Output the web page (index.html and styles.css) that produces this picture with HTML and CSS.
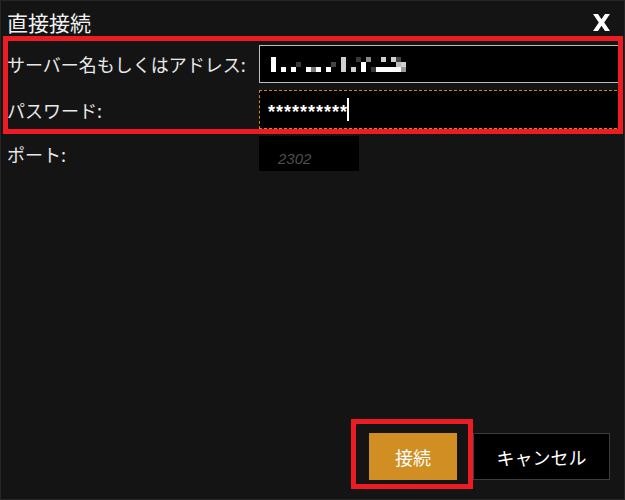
FILE: index.html
```html
<!DOCTYPE html>
<html lang="ja">
<head>
<meta charset="utf-8">
<title>直接接続</title>
<link rel="stylesheet" href="styles.css">
</head>
<body>
<div class="dialog">
  <div class="header">
    <div class="title">直接接続</div>
    <svg class="close" width="17" height="17" viewBox="0 0 17 17" aria-label="閉じる">
      <polygon fill="#ffffff" points="0,0 5,0 8.5,5.3 12,0 17,0 11.2,8.5 17,17 12,17 8.5,11.7 5,17 0,17 5.8,8.5"/>
    </svg>
  </div>
  <div class="form">
    <div class="row row-server">
      <label class="label">サーバー名もしくはアドレス:</label>
      <div class="field field-server">
        <svg class="mosaic" width="135" height="15" viewBox="0 0 27 3" shape-rendering="crispEdges">
          <rect x="0" y="0" width="1" height="3" fill="#fff"/>
          <rect x="2" y="2" width="1" height="1" fill="#fff"/>
          <rect x="4" y="2" width="1" height="1" fill="#fff"/>
          <rect x="5" y="1" width="1" height="1" fill="#3a3a3a"/>
          <rect x="7" y="2" width="1" height="1" fill="#fff"/>
          <rect x="8" y="2" width="1" height="1" fill="#7a7a7a"/>
          <rect x="9" y="2" width="1" height="1" fill="#fff"/>
          <rect x="11" y="2" width="1" height="1" fill="#fff"/>
          <rect x="12" y="1" width="1" height="1" fill="#444"/>
          <rect x="14" y="0" width="1" height="3" fill="#cfcfcf"/>
          <rect x="16" y="2" width="1" height="1" fill="#cfcfcf"/>
          <rect x="17" y="0" width="1" height="1" fill="#3a3a3a"/>
          <rect x="18" y="1" width="1" height="2" fill="#fff"/>
          <rect x="19" y="0" width="1" height="1" fill="#8a8a8a"/>
          <rect x="20" y="2" width="1" height="1" fill="#3a3a3a"/>
          <rect x="21" y="2" width="5" height="1" fill="#fff"/>
          <rect x="22" y="0" width="1" height="1" fill="#d0d0d0"/>
          <rect x="24" y="0" width="1" height="1" fill="#d0d0d0"/>
          <rect x="25" y="0" width="1" height="1" fill="#444"/>
          <rect x="25" y="1" width="1" height="1" fill="#bdbdbd"/>
          <rect x="26" y="1" width="1" height="1" fill="#cfcfcf"/>
          <rect x="26" y="2" width="1" height="1" fill="#9a9a9a"/>
        </svg>
      </div>
    </div>
    <div class="row row-password">
      <label class="label">パスワード:</label>
      <div class="field field-password"><span class="stars">**********</span><span class="caret"></span></div>
    </div>
    <div class="row row-port">
      <label class="label">ポート:</label>
      <div class="field field-port"><span class="placeholder">2302</span></div>
    </div>
  </div>
  <div class="footer">
    <button class="btn btn-primary">接続</button>
    <button class="btn btn-secondary">キャンセル</button>
  </div>
  <div class="mark mark-fields"></div>
  <div class="mark mark-button"></div>
</div>
</body>
</html>
```

FILE: styles.css
```css
html, body {
  margin: 0;
  padding: 0;
  background: #141414;
}

.dialog {
  position: relative;
  width: 625px;
  height: 500px;
  box-sizing: border-box;
  border: 1px solid #262626;
  background: #141414;
  display: flex;
  flex-direction: column;
  font-family: "Noto Sans CJK JP", "Noto Sans", sans-serif;
  color: #ececec;
}

.header {
  height: 35px;
  box-sizing: border-box;
  padding: 11px 14px 0 6px;
  display: flex;
  justify-content: space-between;
  align-items: flex-start;
}

.title {
  font-size: 21px;
  line-height: 21px;
  color: #f2f2f2;
}

.close {
  margin-top: 2px;
  display: block;
}

.form {
  padding: 9px 2px 0 6px;
  display: grid;
  row-gap: 7px;
}

.row {
  display: grid;
  grid-template-columns: 252px 1fr;
  align-items: center;
}

.row-server { height: 38px; }
.row-password { height: 39px; }
.row-port { height: 35px; }

.label {
  font-size: 18px;
  line-height: 20px;
  color: #e8e8e8;
  white-space: nowrap;
}

.field {
  background: #000;
  box-sizing: border-box;
  height: 100%;
  display: flex;
  align-items: center;
}

.field-server {
  border: 1px solid #bdbdbd;
  padding-left: 11px;
}

.mosaic {
  display: block;
  margin-top: 1px;
}

.field-password {
  border: 1px dashed #c8861e;
  padding-left: 8px;
}

.stars {
  font-family: "Liberation Sans", sans-serif;
  font-size: 18px;
  font-weight: bold;
  letter-spacing: 1px;
  color: #fff;
  line-height: 1;
  margin-top: 5px;
}

.caret {
  display: block;
  width: 2px;
  height: 23px;
  background: #fff;
  margin-left: -1px;
}

.field-port {
  width: 100px;
  padding: 9px 0 0 19px;
}

.placeholder {
  font-family: "Liberation Sans", sans-serif;
  font-style: italic;
  font-size: 15px;
  color: #4e4e4e;
}

.footer {
  margin-top: auto;
  display: flex;
  justify-content: flex-end;
  gap: 16px;
  padding: 0 14px 19px 0;
}

.btn {
  height: 47px;
  box-sizing: border-box;
  font-family: "Noto Sans CJK JP", "Noto Sans", sans-serif;
  font-size: 18px;
  color: #fff;
  margin: 0;
  padding: 0;
}

.btn-primary {
  width: 88px;
  background: #d18e22;
  border: none;
}

.btn-secondary {
  width: 137px;
  background: #000;
  border: 1px solid #3c3c3c;
}

.mark {
  position: absolute;
  box-sizing: border-box;
  border: 5px solid #ed1c24;
  pointer-events: none;
}

.mark-fields {
  left: 2px;
  top: 35px;
  width: 620px;
  height: 98px;
}

.mark-button {
  left: 350px;
  top: 418px;
  width: 122px;
  height: 70px;
}
```
